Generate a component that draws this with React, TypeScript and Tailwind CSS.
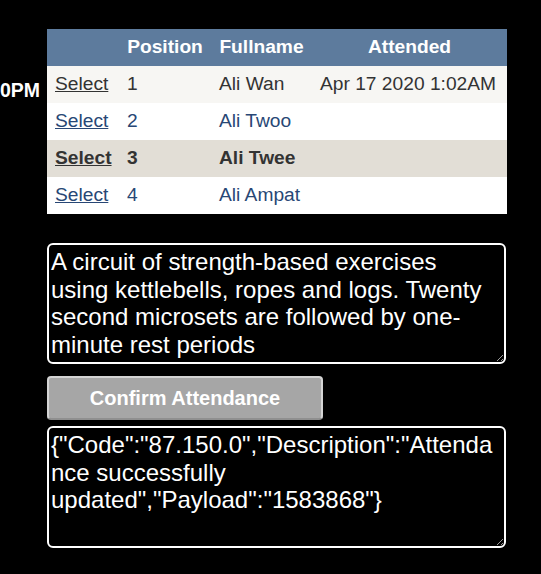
const rows = [
  { pos: '1', name: 'Ali Wan', attended: 'Apr 17 2020 1:02AM', tone: 'odd' },
  { pos: '2', name: 'Ali Twoo', attended: '', tone: 'even' },
  { pos: '3', name: 'Ali Twee', attended: '', tone: 'selected' },
  { pos: '4', name: 'Ali Ampat', attended: '', tone: 'even' },
];

const toneClass: Record<string, string> = {
  odd: 'bg-[#f7f6f3] text-[#333333]',
  even: 'bg-white text-[#284775]',
  selected: 'bg-[#e2ded6] text-[#333333] font-bold',
};

const description =
  'A circuit of strength-based exercises using kettlebells, ropes and logs. Twenty second microsets are followed by one-minute rest periods';

const response = '{"Code":"87.150.0","Description":"Attendance successfully updated","Payload":"1583868"}';

export default function App() {
  return (
    <div className="min-h-[574px] w-[541px] bg-black font-['Liberation_Sans',Arial,sans-serif] pt-[29px] overflow-hidden">
      <div className="flex">
        {/* session time */}
        <div className="w-[47px] shrink-0 overflow-hidden flex justify-end pr-[7px] pt-[50px]">
          <span className="whitespace-nowrap text-white font-bold text-[19.5px] leading-[23px]">0PM</span>
        </div>

        <div className="flex flex-col">
          <table className="w-[460px] border-collapse table-fixed text-[19.2px]">
            <colgroup>
              <col className="w-[72px]" />
              <col className="w-[92px]" />
              <col className="w-[101px]" />
              <col className="w-[195px]" />
            </colgroup>
            <thead>
              <tr className="h-[37px] bg-[#5d7b9d] text-white font-bold">
                <th className="px-[8px]"></th>
                <th className="px-[8px] text-center">Position</th>
                <th className="px-[8px] text-center">Fullname</th>
                <th className="px-[8px] text-center">Attended</th>
              </tr>
            </thead>
            <tbody>
              {rows.map((r) => (
                <tr key={r.pos} className={`h-[37px] ${toneClass[r.tone]}`}>
                  <td className="pl-[8px] whitespace-nowrap">
                    <a href="#" className="underline">
                      Select
                    </a>
                  </td>
                  <td className="pl-[8px]">{r.pos}</td>
                  <td className="pl-[8px] whitespace-nowrap">{r.name}</td>
                  <td className="pl-[8px] whitespace-nowrap">{r.attended}</td>
                </tr>
              ))}
            </tbody>
          </table>

          <textarea
            readOnly
            defaultValue={description}
            className="block mt-[29px] w-[459px] h-[121px] bg-black text-white text-[24px] leading-[27.6px] border-2 border-white rounded-[6px] pl-[2px] pr-[9px] pt-[3px] overflow-hidden outline-none"
          />

          <button
            type="button"
            className="block mt-[12px] w-[276px] h-[44px] bg-[#a6a6a6] text-white font-bold text-[20px] border-2 border-[#d4d4d4] border-b-[#8f8f8f] rounded-[4px]"
          >
            Confirm Attendance
          </button>

          <textarea
            readOnly
            defaultValue={response}
            className="block mt-[6px] w-[459px] h-[122px] bg-black text-white text-[24px] leading-[27.6px] border-2 border-white rounded-[6px] pl-[2px] pr-[9px] pt-[3px] overflow-hidden outline-none"
          />
        </div>
      </div>
    </div>
  );
}
